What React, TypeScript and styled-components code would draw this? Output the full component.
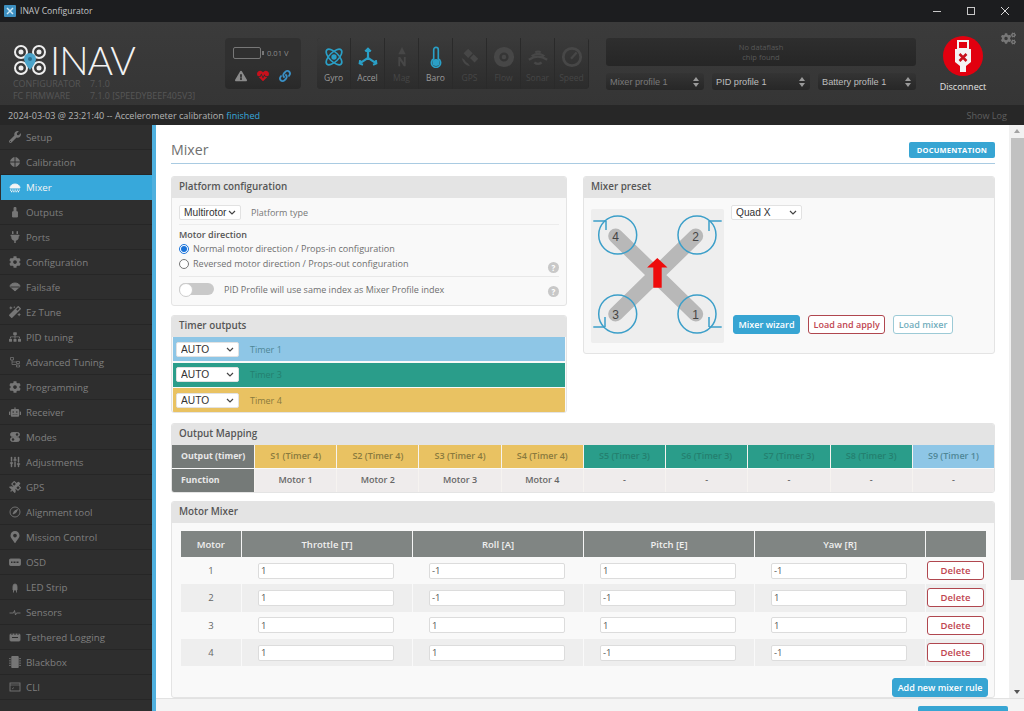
import styled, { createGlobalStyle } from 'styled-components';
import type { ReactNode } from 'react';
import {
  FaWrench, FaPlug, FaCog, FaCogs, FaMagic, FaSitemap, FaSatellite, FaMapMarkerAlt,
  FaMicrochip, FaExclamationTriangle, FaLink, FaHeartbeat, FaRobot,
} from 'react-icons/fa';
import { SlidersVertical } from 'lucide-react';

const GlobalStyle = createGlobalStyle`
  html, body { margin: 0; padding: 0; height: 711px; overflow: hidden; }
  body { font-family: "Open Sans", "Liberation Sans", sans-serif; font-size: 10px; color: #555; }
  * { box-sizing: border-box; }
`;

// #region Window chrome
const Page = styled.div`
  width: 1024px;
  height: 711px;
  display: flex;
  flex-direction: column;
  overflow: hidden;
  background: #fff;
`;
const TitleBar = styled.div`
  height: 22px;
  flex: none;
  display: flex;
  align-items: center;
  background: #1c1d1f;
  padding-left: 4px;
  color: #c4c6c8;
  font-size: 8.6px;
`;
const TitleIcon = styled.svg`
  width: 12px;
  height: 12px;
  margin-right: 4px;
`;
const WindowButtons = styled.div`
  margin-left: auto;
  display: flex;
  padding-right: 2px;
`;
const WindowButton = styled.div`
  width: 34px;
  height: 22px;
  display: flex;
  align-items: center;
  justify-content: center;
`;
// #endregion

// #region Header
const Header = styled.div`
  position: relative;
  height: 83px;
  flex: none;
  display: flex;
  background: linear-gradient(#3b3b3b, #353535);
  padding: 16px 0 0 13px;
`;
const Brand = styled.div`
  width: 212px;
  flex: none;
`;
const LogoRow = styled.div`
  display: flex;
  align-items: center;
  height: 36px;
  margin-top: 4px;
`;
const LogoText = styled.div`
  font-family: "Lato", "Open Sans", sans-serif;
  font-weight: 300;
  font-size: 39px;
  line-height: 30px;
  letter-spacing: -1px;
  color: #f2f2f2;
  margin-left: 3px;
`;
const VersionRow = styled.div`
  display: flex;
  font-size: 8.9px;
  line-height: 12px;
  color: #565656;
  &:first-of-type { margin-top: 3px; }
`;
const VersionLabel = styled.span`
  width: 77px;
`;
const Battery = styled.div`
  width: 76px;
  height: 51px;
  flex: none;
  border-radius: 4px;
  background: linear-gradient(#303030 55%, #292929);
  display: flex;
  flex-direction: column;
  margin-right: 16px;
`;
const BatteryTop = styled.div`
  display: flex;
  align-items: center;
  gap: 6px;
  padding: 9px 0 0 8px;
  color: #8a8a8a;
  font-size: 7.6px;
`;
const BatteryShell = styled.div`
  position: relative;
  width: 28px;
  height: 12px;
  border: 1.5px solid #777;
  border-radius: 2px;
  &::after {
    content: '';
    position: absolute;
    right: -4px;
    top: 3px;
    width: 2px;
    height: 4px;
    background: #777;
  }
`;
const BatteryIcons = styled.div`
  display: flex;
  align-items: center;
  gap: 10px;
  padding: 11px 0 0 10px;
  font-size: 12px;
`;
const Sensors = styled.div`
  width: 272px;
  height: 51px;
  flex: none;
  display: grid;
  grid-template-columns: repeat(8, 34px);
  border-radius: 4px;
  overflow: hidden;
  margin-right: 17px;
  background: #2c2c2c;
`;
const Sensor = styled.div<{ $on?: boolean }>`
  display: flex;
  flex-direction: column;
  align-items: center;
  padding-top: 8px;
  background: linear-gradient(#3a3a3a, #2c2c2c);
  border-right: 1px solid #2a2a2a;
  color: ${(p) => (p.$on ? '#9a9a9a' : '#464646')};
  font-size: 8.5px;
  line-height: 12px;
  svg { width: 22px; height: 22px; margin-bottom: 4px; }
`;
const ProfilesColumn = styled.div`
  width: 310px;
  flex: none;
`;
const FlashBar = styled.div`
  height: 28px;
  border-radius: 3px;
  background: linear-gradient(#2e2e2e, #262626);
  color: #585858;
  font-size: 7.5px;
  line-height: 9.500px;
  text-align: center;
  padding-top: 5px;
`;
const ProfileRow = styled.div`
  display: grid;
  grid-template-columns: repeat(3, 98px);
  gap: 8px;
  margin-top: 7px;
`;
const Profile = styled.div<{ $dim?: boolean }>`
  height: 17px;
  border-radius: 3px;
  background: linear-gradient(#343434, #272727);
  display: flex;
  align-items: center;
  justify-content: space-between;
  padding: 0 5px 0 4px;
  color: ${(p) => (p.$dim ? '#7a7a7a' : '#bdbdbd')};
  font-family: "Liberation Sans", sans-serif;
  font-size: 9.2px;
`;
const Spinner = styled.svg`
  width: 6px;
  height: 10px;
`;
const DisconnectBox = styled.div`
  width: 66px;
  margin: -2px 0 0 14px;
  display: flex;
  flex-direction: column;
  align-items: center;
  color: #e4e4e4;
  font-size: 9px;
  line-height: 12px;
  svg { width: 40px; height: 40px; margin-bottom: 5px; }
`;
const GearSpot = styled.div`
  position: absolute;
  right: 8px;
  top: 9px;
  color: #777;
  font-size: 15px;
  line-height: 0;
`;
const LogBar = styled.div`
  height: 20px;
  flex: none;
  display: flex;
  align-items: center;
  justify-content: space-between;
  padding: 0 17px 0 8px;
  background: #272727;
  color: #b4b4b4;
  font-size: 9.1px;
`;
const Finished = styled.span`
  color: #37a8db;
`;
const ShowLog = styled.span`
  color: #5f5f5f;
`;
// #endregion

// #region Sidebar
const Body = styled.div`
  flex: 1;
  min-height: 0;
  display: flex;
`;
const Sidebar = styled.nav`
  width: 156px;
  flex: none;
  background: #2e2e2e;
  border-right: 4px solid #4fb0de;
`;
const NavItem = styled.div<{ $active?: boolean }>`
  height: 25px;
  display: flex;
  align-items: center;
  margin-left: ${(p) => (p.$active ? '1px' : '0')};
  padding-left: ${(p) => (p.$active ? '8px' : '9px')};
  border-bottom: 1px solid ${(p) => (p.$active ? '#37a8db' : '#262626')};
  background: ${(p) => (p.$active ? '#37a8db' : 'transparent')};
  color: ${(p) => (p.$active ? '#f4f4f4' : '#7f7f7f')};
  font-size: 9.750px;
  svg { width: 12px; height: 12px; margin-right: 5px; flex: none; color: ${(p) => (p.$active ? '#f4f4f4' : '#767676')}; }
`;
// #endregion

// #region Content
const Main = styled.div`
  flex: 1;
  min-width: 0;
  display: flex;
  flex-direction: column;
`;
const MainRow = styled.div`
  flex: 1;
  min-height: 0;
  display: flex;
`;
const Content = styled.div`
  flex: 1;
  min-width: 0;
  overflow: hidden;
  padding: 17px 14px 0 15px;
`;
const TitleRow = styled.div`
  height: 22px;
  display: flex;
  justify-content: space-between;
  border-bottom: 1px solid #a9cbe2;
  margin-bottom: 12px;
`;
const PageTitle = styled.div`
  font-size: 14.2px;
  line-height: 16px;
  color: #707070;
`;
const DocButton = styled.div`
  width: 86px;
  height: 16px;
  border-radius: 2px;
  background: #37a5d3;
  color: #fff;
  font-size: 7.5px;
  font-weight: 700;
  line-height: 16px;
  letter-spacing: 0.2px;
  text-align: center;
`;
const Columns = styled.div`
  display: flex;
  gap: 16px;
  margin-bottom: 10px;
`;
const LeftColumn = styled.div`
  width: 396px;
  display: flex;
  flex-direction: column;
  gap: 9px;
`;
const Panel = styled.section<{ $height?: number; $grow?: boolean; $gapBelow?: number }>`
  border: 1px solid #e4e4e4;
  border-radius: 3px;
  background: #f9f9f9;
  ${(p) => (p.$height ? `height: ${p.$height}px;` : '')}
  ${(p) => (p.$grow ? 'flex: 1;' : '')}
  ${(p) => (p.$gapBelow ? `margin-bottom: ${p.$gapBelow}px;` : '')}
  overflow: hidden;
`;
const PanelHead = styled.div`
  height: 21px;
  background: #e4e4e4;
  padding-left: 7px;
  font-size: 9.850px;
  font-weight: 600;
  line-height: 19px;
  color: #565656;
`;
const PanelBody = styled.div`
  padding: 7px 7px 0;
`;
const NativeSelect = styled.select<{ $w: number }>`
  appearance: none;
  width: ${(p) => p.$w}px;
  height: 15px;
  padding: 0 0 0 4px;
  border: 1px solid #e2e2e2;
  border-radius: 2px;
  background: #fff url("data:image/svg+xml,%3Csvg xmlns='http://www.w3.org/2000/svg' width='8' height='5'%3E%3Cpath d='M1 1l3 3 3-3' fill='none' stroke='%23444' stroke-width='1.200'/%3E%3C/svg%3E") no-repeat right 4px center;
  color: #333;
  font-family: "Liberation Sans", sans-serif;
  font-size: 10.200px;
`;
const PlatformRow = styled.div`
  display: flex;
  align-items: center;
  gap: 10px;
  padding-bottom: 4px;
  border-bottom: 1px solid #ececec;
  color: #777;
  font-size: 9px;
`;
const FieldTitle = styled.div`
  margin-top: 3px;
  height: 13px;
  font-size: 9px;
  font-weight: 600;
  line-height: 13px;
  color: #555;
`;
const RadioRow = styled.label`
  display: flex;
  align-items: center;
  height: 15px;
  color: #6f6f6f;
  font-size: 9.050px;
  input { width: 10px; height: 10px; margin: 0 4px 0 0; accent-color: #1a73d9; }
`;
const Help = styled.span<{ $drop: number }>`
  position: relative;
  top: ${(p) => p.$drop}px;
  width: 11px;
  height: 11px;
  margin-left: auto;
  border-radius: 50%;
  background: #c8c8c8;
  color: #fff;
  font-size: 8px;
  font-weight: 700;
  line-height: 11px;
  text-align: center;
`;
const ToggleRow = styled.div`
  display: flex;
  align-items: center;
  height: 25px;
  margin-top: 5px;
  border-top: 1px solid #e8e8e8;
  color: #6f6f6f;
  font-size: 9px;
`;
const Toggle = styled.div`
  position: relative;
  width: 35px;
  height: 12px;
  margin-right: 10px;
  border-radius: 6px;
  background: #c9c9c9;
  &::before {
    content: '';
    position: absolute;
    left: 0;
    top: 0;
    width: 12px;
    height: 12px;
    border: 1px solid #ccc;
    border-radius: 50%;
    background: #fff;
  }
`;
const TimerRow = styled.div<{ $bg: string; $fg: string }>`
  height: 24px;
  margin: 0 1px 1.500px;
  display: flex;
  align-items: center;
  gap: 11px;
  padding-left: 3px;
  background: ${(p) => p.$bg};
  color: ${(p) => p.$fg};
  font-size: 9px;
`;
const PresetBody = styled.div`
  display: flex;
  padding: 7px 8px 0 7px;
`;
const Diagram = styled.svg`
  width: 133px;
  height: 134px;
  margin-top: 4px;
  flex: none;
`;
const PresetSide = styled.div`
  flex: 1;
  display: flex;
  flex-direction: column;
  padding-left: 7px;
`;
const PresetButtons = styled.div`
  display: flex;
  gap: 8px;
  margin-top: 95px;
  margin-left: 2px;
`;
const Btn = styled.div<{ $kind: 'primary' | 'danger' | 'info' }>`
  height: 19px;
  padding: 0 4.500px;
  border-radius: 3px;
  border: 1px solid ${(p) => (p.$kind === 'primary' ? '#37a5d3' : p.$kind === 'danger' ? '#b0474f' : '#9ccad6')};
  background: ${(p) => (p.$kind === 'primary' ? '#37a5d3' : '#fff')};
  color: ${(p) => (p.$kind === 'primary' ? '#fff' : p.$kind === 'danger' ? '#c04550' : '#72aebd')};
  font-size: 9px;
  font-weight: 600;
  line-height: 17px;
  white-space: nowrap;
  text-align: center;
`;
const MappingGrid = styled.div`
  display: grid;
  grid-template-columns: 82px repeat(9, 1fr);
  grid-auto-rows: 23px;
  gap: 1px 0;
  padding: 0 0 1px;
`;
const MapHead = styled.div`
  background: #757a78;
  color: #e8e8e8;
  padding-left: 9px;
  font-size: 8.800px;
  font-weight: 700;
  line-height: 22px;
`;
const MapCell = styled.div<{ $bg: string; $fg?: string }>`
  background: ${(p) => p.$bg};
  color: ${(p) => p.$fg ?? '#666'};
  border-left: 1px solid #f6f3f0;
  font-size: 9px;
  font-weight: 600;
  line-height: 22px;
  text-align: center;
`;
const MixerBody = styled.div`
  padding: 8px 8px 0;
`;
const MixerTable = styled.table`
  width: 805px;
  table-layout: fixed;
  border-collapse: collapse;
`;
const Th = styled.th<{ $w: number }>`
  width: ${(p) => p.$w}px;
  height: 26px;
  padding: 0;
  background: #808583;
  border-left: 1px solid #f5f5f5;
  color: #f0f0f0;
  font-size: 9.500px;
  font-weight: 600;
  &:first-child { border-left: 0; }
`;
const Tr = styled.tr<{ $shade: boolean }>`
  height: 27.300px;
  background: ${(p) => (p.$shade ? '#eeeeee' : 'transparent')};
`;
const Td = styled.td`
  padding: 0;
  border-left: 1px solid #f9f9f9;
  text-align: center;
  color: #666;
  font-size: 9.500px;
`;
const Coef = styled.input`
  display: block;
  width: 136px;
  height: 16px;
  margin: 0 0 0 16px;
  padding: 0 2px;
  border: 1px solid #dcdcdc;
  border-radius: 2px;
  background: #fff;
  color: #555;
  font-family: "Open Sans", sans-serif;
  font-size: 9.500px;
`;
const DeleteBtn = styled(Btn)`
  width: 57px;
  margin-left: 1px;
  font-size: 9.500px;
`;
const AddRow = styled.div`
  display: flex;
  justify-content: flex-end;
  margin: 12px -2px 0 0;
`;
const Scrollbar = styled.div`
  position: relative;
  width: 15px;
  flex: none;
  background: #f1f1f1;
`;
const ScrollThumb = styled.div`
  position: absolute;
  left: 2px;
  right: 0;
  top: 13px;
  height: 442px;
  background: #c1c1c1;
`;
const ScrollArrow = styled.div<{ $down?: boolean }>`
  position: absolute;
  left: 5px;
  ${(p) => (p.$down ? 'bottom: 4px;' : 'top: 4px;')}
  width: 0;
  height: 0;
  border-left: 3px solid transparent;
  border-right: 3px solid transparent;
  ${(p) => (p.$down ? 'border-top: 4px solid #555;' : 'border-bottom: 4px solid #a3a3a3;')}
`;
const Footer = styled.div`
  height: 13px;
  flex: none;
  overflow: hidden;
  display: flex;
  justify-content: flex-end;
  padding-right: 16px;
  background: #f4f4f4;
  border-top: 1px solid #e2e2e2;
`;
const SaveButton = styled.div`
  width: 90px;
  height: 18px;
  margin-top: 7px;
  border-radius: 2px;
  background: #37a5d3;
`;
// #endregion

const Icon = ({ children, color = 'currentColor' }: { children: ReactNode; color?: string }) => (
  <svg viewBox="0 0 24 24" fill="none" stroke={color} strokeWidth="1.8">{children}</svg>
);

const navItems: [string, ReactNode][] = [
  ['Setup', <FaWrench />],
  ['Calibration', <Icon><circle cx="12" cy="12" r="9" fill="currentColor" /><path d="M12 2v20M2 12h20" stroke="#2e2e2e" strokeWidth="2" /></Icon>],
  ['Mixer', <Icon><path d="M2 14a10 8 0 0 1 20 0z" fill="currentColor" /><path d="M2 18h20M4 21h16" strokeDasharray="2 1.5" strokeWidth="2.5" /></Icon>],
  ['Outputs', <Icon><path d="M10 3h4v6l3 3v10H7V12l3-3z" fill="currentColor" /></Icon>],
  ['Ports', <FaPlug />],
  ['Configuration', <FaCog />],
  ['Failsafe', <Icon><path d="M2 11a10 7 0 0 1 20 0l-10 9z" fill="currentColor" /><path d="M3 12h18" stroke="#2e2e2e" /></Icon>],
  ['Ez Tune', <FaMagic />],
  ['PID tuning', <FaSitemap />],
  ['Advanced Tuning', <Icon><path d="M3 3h6v5H3zM15 11h6v4h-6zM15 18h6v4h-6zM6 8v9h9M6 12h9" strokeWidth="1.5" /></Icon>],
  ['Programming', <FaCog />],
  ['Receiver', <FaRobot />],
  ['Modes', <Icon><rect x="3" y="3" width="18" height="8" rx="4" fill="currentColor" /><rect x="3" y="13" width="18" height="8" rx="4" fill="currentColor" /><circle cx="16" cy="7" r="2.5" fill="#2e2e2e" stroke="none" /><circle cx="8" cy="17" r="2.5" fill="#2e2e2e" stroke="none" /></Icon>],
  ['Adjustments', <SlidersVertical strokeWidth={3} />],
  ['GPS', <FaSatellite />],
  ['Alignment tool', <Icon><circle cx="12" cy="12" r="10" /><path d="M8 16l3-6 6-3-3 6z" fill="currentColor" /></Icon>],
  ['Mission Control', <FaMapMarkerAlt />],
  ['OSD', <Icon><rect x="1" y="6" width="22" height="13" rx="2" fill="currentColor" /><path d="M4 12.5h16" stroke="#2e2e2e" strokeWidth="3" strokeDasharray="2 1" /></Icon>],
  ['LED Strip', <Icon><path d="M8 11a4 5 0 0 1 8 0v7H8zM9 18v5M15 18v5" fill="currentColor" /></Icon>],
  ['Sensors', <Icon><path d="M1 14h8l2-5 2 9 2-4h8" /></Icon>],
  ['Tethered Logging', <Icon><rect x="2" y="6" width="20" height="14" rx="2" fill="currentColor" /><path d="M6 4v4M12 4v4M18 4v4M6 13h12" stroke="#2e2e2e" strokeWidth="2" /></Icon>],
  ['Blackbox', <FaMicrochip />],
  ['CLI', <Icon><rect x="2" y="4" width="20" height="16" /><path d="M2 8h20M6 16l4-3" strokeWidth="1.4" /></Icon>],
];

const sensorBlue = '#2a9fc6';
const sensors: { label: string; on?: boolean; icon: ReactNode }[] = [
  {
    label: 'Gyro',
    on: true,
    icon: (
      <Icon color={sensorBlue}>
        <ellipse cx="12" cy="12" rx="11" ry="5" transform="rotate(45 12 12)" />
        <ellipse cx="12" cy="12" rx="11" ry="5" transform="rotate(-45 12 12)" />
        <circle cx="12" cy="12" r="2" fill={sensorBlue} />
      </Icon>
    ),
  },
  {
    label: 'Accel',
    on: true,
    icon: (
      <Icon color={sensorBlue}>
        <path d="M12 13V3M9 6l3-3 3 3M12 13l-9 6M3.5 15.5L3 19l3.5 1.5M12 13l9 6M20.5 15.5L21 19l-3.500 1.500" strokeWidth="2.4" />
      </Icon>
    ),
  },
  {
    label: 'Mag',
    icon: (
      <svg viewBox="0 0 24 24" fill="#474747">
        <path d="M12 1l4 8H8z" />
        <path d="M8 22V12h2l4 6v-6h2v10h-2l-4-6v6z" />
      </svg>
    ),
  },
  {
    label: 'Baro',
    on: true,
    icon: (
      <Icon color={sensorBlue}>
        <path d="M9.500 14V4a2.500 2.500 0 0 1 5 0v10a5 5 0 1 1-5 0z" />
        <circle cx="12" cy="18" r="3" fill={sensorBlue} />
      </Icon>
    ),
  },
  {
    label: 'GPS',
    icon: (
      <svg viewBox="0 0 24 24" fill="#474747">
        <path d="M10 3l5 5-5 5-5-5zM16 9l5 5-4 4-5-5zM3 13c1 5 4 8 9 9l-2-3c-2-1-3-2-4-4z" />
      </svg>
    ),
  },
  {
    label: 'Flow',
    icon: (
      <svg viewBox="0 0 24 24" fill="#474747">
        <path fillRule="evenodd" d="M12 1a11 11 0 1 0 0 22 11 11 0 0 0 0-22zm0 6a5 5 0 1 1 0 10 5 5 0 0 1 0-10z" />
        <circle cx="12" cy="12" r="2.500" />
      </svg>
    ),
  },
  {
    label: 'Sonar',
    icon: (
      <Icon color="#474747">
        <path d="M9 7q3-2 6 0M5 11q7-5 14 0M2 15q10-7 20 0M8 18q4 3 8 0" strokeWidth="2.400" />
      </Icon>
    ),
  },
  {
    label: 'Speed',
    icon: (
      <Icon color="#474747">
        <circle cx="12" cy="12" r="9.500" strokeWidth="3" />
        <path d="M11 14l6-7" strokeWidth="2.500" />
      </Icon>
    ),
  },
];

const timers = [
  { select: 'AUTO', label: 'Timer 1', bg: '#8ec6e6', fg: '#4f8796' },
  { select: 'AUTO', label: 'Timer 3', bg: '#2a9d8a', fg: '#24806f' },
  { select: 'AUTO', label: 'Timer 4', bg: '#e9c262', fg: '#8a7a3e' },
];

const blue = timers[0];
const green = timers[1];
const yellow = timers[2];
const outputs = [
  { name: 'S1 (Timer 4)', fn: 'Motor 1', t: yellow },
  { name: 'S2 (Timer 4)', fn: 'Motor 2', t: yellow },
  { name: 'S3 (Timer 4)', fn: 'Motor 3', t: yellow },
  { name: 'S4 (Timer 4)', fn: 'Motor 4', t: yellow },
  { name: 'S5 (Timer 3)', fn: '-', t: green },
  { name: 'S6 (Timer 3)', fn: '-', t: green },
  { name: 'S7 (Timer 3)', fn: '-', t: green },
  { name: 'S8 (Timer 3)', fn: '-', t: green },
  { name: 'S9 (Timer 1)', fn: '-', t: blue },
];

const mixerRows = [
  ['1', '-1', '1', '-1'],
  ['1', '-1', '-1', '1'],
  ['1', '1', '1', '1'],
  ['1', '1', '-1', '-1'],
];

const motors = [
  { n: '4', x: 24.7, y: 27, cx: 26.7, cy: 26, d: 'M2.300 12H15M15 12v9' },
  { n: '2', x: 104.7, y: 27, cx: 106, cy: 26, d: 'M130.700 12H118M118 12v10' },
  { n: '3', x: 24.7, y: 105, cx: 26.700, cy: 105, d: 'M2.300 118H14M14 118v-10' },
  { n: '1', x: 104.7, y: 105, cx: 106, cy: 105, d: 'M130.700 118H118M118 118v-10' },
];

const Spin = () => (
  <Spinner viewBox="0 0 6 10" fill="#9a9a9a">
    <path d="M3 0l3 4H0zM3 10L0 6h6z" />
  </Spinner>
);

const App = () => {
  return (
    <Page>
      <GlobalStyle />
      <TitleBar>
        <TitleIcon viewBox="0 0 12 12">
          <rect width="12" height="12" rx="1" fill="#3d8fc0" />
          <path d="M3 3l6 6M9 3L3 9" stroke="#cfe8f5" strokeWidth="1.500" />
        </TitleIcon>
        INAV Configurator
        <WindowButtons>
          <WindowButton>
            <svg width="10" height="10" viewBox="0 0 10 10"><path d="M1 5.500h8" stroke="#c8c8c8" /></svg>
          </WindowButton>
          <WindowButton>
            <svg width="10" height="10" viewBox="0 0 10 10"><rect x="1.500" y="1.500" width="7" height="7" fill="none" stroke="#c8c8c8" /></svg>
          </WindowButton>
          <WindowButton>
            <svg width="10" height="10" viewBox="0 0 10 10"><path d="M1 1l8 8M9 1L1 9" stroke="#d8d8d8" /></svg>
          </WindowButton>
        </WindowButtons>
      </TitleBar>

      <Header>
        <Brand>
          <LogoRow>
            <svg width="34" height="32" viewBox="0 0 34 32" fill="none" stroke="#eee" strokeWidth="2">
              <path d="M12 12l10 8M22 12l-10 8" strokeWidth="3" />
              <circle cx="8" cy="8" r="6" fill="#383838" />
              <circle cx="26" cy="8" r="6" fill="#383838" />
              <circle cx="8" cy="24" r="6" fill="#383838" />
              <circle cx="26" cy="24" r="6" fill="#383838" />
              <circle cx="8" cy="8" r="1.500" fill="#eee" />
              <circle cx="26" cy="8" r="1.500" fill="#eee" />
              <circle cx="8" cy="24" r="1.500" fill="#eee" />
              <circle cx="26" cy="24" r="1.500" fill="#eee" />
              <path d="M17 9a6 6 0 0 1 6 6c0 4-6 11-6 11s-6-7-6-11a6 6 0 0 1 6-6z" fill="#4aa3c9" stroke="none" />
              <circle cx="17" cy="15" r="2" fill="#2d6f8f" stroke="none" />
            </svg>
            <LogoText>INAV</LogoText>
          </LogoRow>
          <VersionRow><VersionLabel>CONFIGURATOR</VersionLabel>7.1.0</VersionRow>
          <VersionRow><VersionLabel>FC FIRMWARE</VersionLabel>7.1.0 [SPEEDYBEEF405V3]</VersionRow>
        </Brand>

        <Battery>
          <BatteryTop><BatteryShell />0.01 V</BatteryTop>
          <BatteryIcons>
            <FaExclamationTriangle color="#8a8a8a" />
            <FaHeartbeat color="#c8101c" />
            <FaLink color="#3a8fc4" />
          </BatteryIcons>
        </Battery>

        <Sensors>
          {sensors.map((s) => (
            <Sensor key={s.label} $on={s.on}>
              {s.icon}
              {s.label}
            </Sensor>
          ))}
        </Sensors>

        <ProfilesColumn>
          <FlashBar>No dataflash<br />chip found</FlashBar>
          <ProfileRow>
            <Profile $dim>Mixer profile 1<Spin /></Profile>
            <Profile>PID profile 1<Spin /></Profile>
            <Profile>Battery profile 1<Spin /></Profile>
          </ProfileRow>
        </ProfilesColumn>

        <DisconnectBox>
          <svg viewBox="0 0 40 40">
            <circle cx="20" cy="20" r="20" fill="#e2000f" />
            <path d="M14 4h12v9h2v13l-5 4v6h-6v-6l-5-4V13h2z" fill="#f4f4f4" />
            <path d="M16 6h8v6h-8z" fill="#e2000f" />
            <path d="M16.500 18l7 7M23.500 18l-7 7" stroke="#c8101c" strokeWidth="2.500" />
          </svg>
          Disconnect
        </DisconnectBox>
        <GearSpot><FaCogs /></GearSpot>
      </Header>

      <LogBar>
        <span>2024-03-03 @ 23:21:40 -- Accelerometer calibration <Finished>finished</Finished></span>
        <ShowLog>Show Log</ShowLog>
      </LogBar>

      <Body>
        <Sidebar>
          {navItems.map(([label, icon]) => (
            <NavItem key={label} $active={label === 'Mixer'}>
              {icon}
              {label}
            </NavItem>
          ))}
        </Sidebar>

        <Main>
          <MainRow>
            <Content>
              <TitleRow>
                <PageTitle>Mixer</PageTitle>
                <DocButton>DOCUMENTATION</DocButton>
              </TitleRow>

              <Columns>
                <LeftColumn>
                  <Panel $height={130}>
                    <PanelHead>Platform configuration</PanelHead>
                    <PanelBody>
                      <PlatformRow>
                        <NativeSelect $w={62} defaultValue="Multirotor"><option>Multirotor</option></NativeSelect>
                        Platform type
                      </PlatformRow>
                      <FieldTitle>Motor direction</FieldTitle>
                      <RadioRow><input type="radio" name="dir" defaultChecked />Normal motor direction / Props-in configuration</RadioRow>
                      <RadioRow><input type="radio" name="dir" />Reversed motor direction / Props-out configuration<Help $drop={4}>?</Help></RadioRow>
                      <ToggleRow>
                        <Toggle />
                        PID Profile will use same index as Mixer Profile index
                        <Help $drop={2}>?</Help>
                      </ToggleRow>
                    </PanelBody>
                  </Panel>

                  <Panel $height={98}>
                    <PanelHead>Timer outputs</PanelHead>
                    {timers.map((t) => (
                      <TimerRow key={t.label} $bg={t.bg} $fg={t.fg}>
                        <NativeSelect $w={63} defaultValue={t.select}><option>AUTO</option></NativeSelect>
                        {t.label}
                      </TimerRow>
                    ))}
                  </Panel>
                </LeftColumn>

                <Panel $height={178} $grow>
                  <PanelHead>Mixer preset</PanelHead>
                  <PresetBody>
                    <Diagram viewBox="0 0 133 134">
                      <rect width="133" height="134" rx="2" fill="#eeeeee" />
                      <path d="M24.700 27L104.700 105M104.700 27L24.700 105" stroke="#b8b8b8" strokeWidth="15" strokeLinecap="round" />
                      {motors.map((m) => (
                        <g key={m.n}>
                          <circle cx={m.cx} cy={m.cy} r="19" fill="none" stroke="#3c9fc9" strokeWidth="1.500" />
                          <path d={m.d} fill="none" stroke="#3c9fc9" strokeWidth="1.500" />
                          <text x={m.x} y={m.y + 4.500} textAnchor="middle" fontFamily="Liberation Sans" fontSize="12" fill="#444">{m.n}</text>
                        </g>
                      ))}
                      <path d="M66.300 49L76.500 58.500H70.700V78.700H62.300V58.500H56.100z" fill="#ee0b0b" />
                    </Diagram>
                    <PresetSide>
                      <NativeSelect $w={71} defaultValue="Quad X"><option>Quad X</option></NativeSelect>
                      <PresetButtons>
                        <Btn $kind="primary">Mixer wizard</Btn>
                        <Btn $kind="danger">Load and apply</Btn>
                        <Btn $kind="info">Load mixer</Btn>
                      </PresetButtons>
                    </PresetSide>
                  </PresetBody>
                </Panel>
              </Columns>

              <Panel $height={70} $gapBelow={8}>
                <PanelHead>Output Mapping</PanelHead>
                <MappingGrid>
                  <MapHead>Output (timer)</MapHead>
                  {outputs.map((o) => (
                    <MapCell key={o.name} $bg={o.t.bg} $fg={o.t.fg}>{o.name}</MapCell>
                  ))}
                  <MapHead>Function</MapHead>
                  {outputs.map((o) => (
                    <MapCell key={o.name} $bg="#efecec">{o.fn}</MapCell>
                  ))}
                </MappingGrid>
              </Panel>

              <Panel>
                <PanelHead>Motor Mixer</PanelHead>
                <MixerBody>
                  <MixerTable>
                    <thead>
                      <tr>
                        <Th $w={61}>Motor</Th>
                        <Th $w={171}>Throttle [T]</Th>
                        <Th $w={171}>Roll [A]</Th>
                        <Th $w={171}>Pitch [E]</Th>
                        <Th $w={171}>Yaw [R]</Th>
                        <Th $w={60} />
                      </tr>
                    </thead>
                    <tbody>
                      {mixerRows.map((row, i) => (
                        <Tr key={i} $shade={i % 2 === 1}>
                          <Td>{i + 1}</Td>
                          {row.map((v, j) => (
                            <Td key={j}><Coef defaultValue={v} /></Td>
                          ))}
                          <Td><DeleteBtn $kind="danger">Delete</DeleteBtn></Td>
                        </Tr>
                      ))}
                    </tbody>
                  </MixerTable>
                  <AddRow><Btn $kind="primary">Add new mixer rule</Btn></AddRow>
                </MixerBody>
              </Panel>
            </Content>
            <Scrollbar>
              <ScrollArrow />
              <ScrollThumb />
              <ScrollArrow $down />
            </Scrollbar>
          </MainRow>
          <Footer><SaveButton /></Footer>
        </Main>
      </Body>
    </Page>
  );
};

export default App;
